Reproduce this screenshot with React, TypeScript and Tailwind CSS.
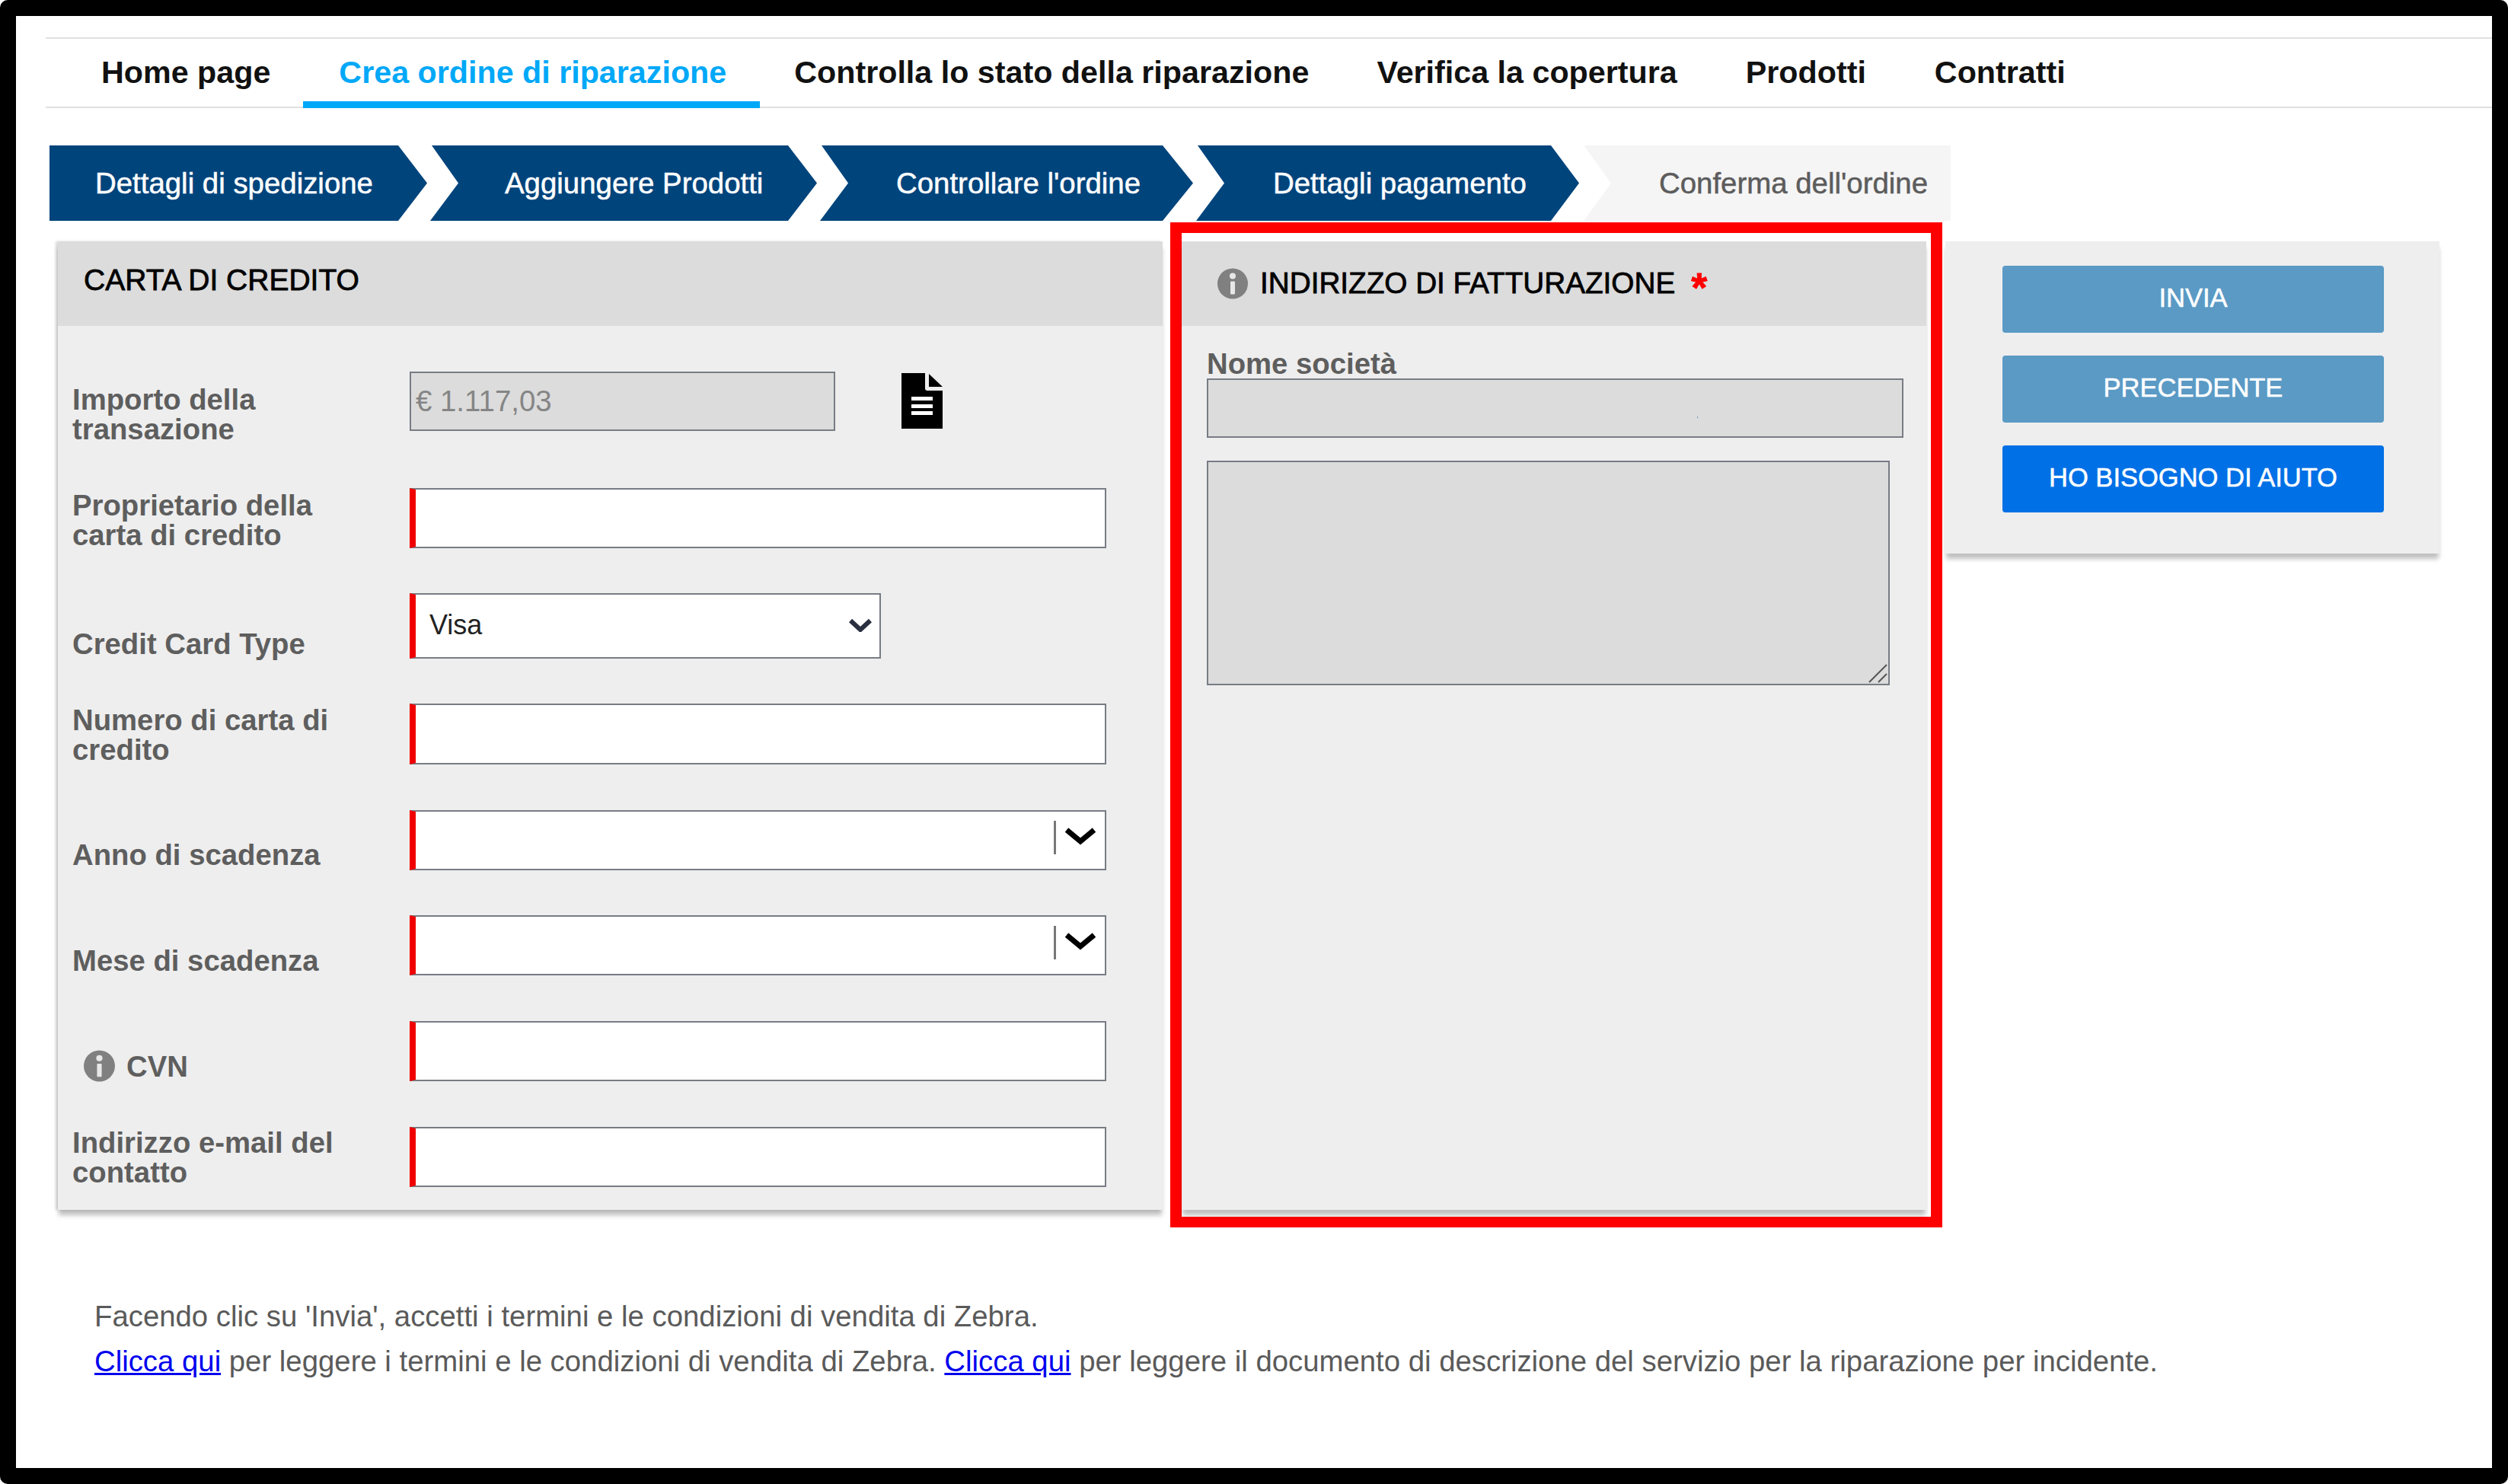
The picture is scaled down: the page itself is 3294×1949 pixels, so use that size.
const font = "font-['Liberation_Sans',Arial,sans-serif]";

function InfoIcon({ className }: { className: string }) {
  return (
    <svg className={className} viewBox="0 0 40 40">
      <circle cx="20" cy="20" r="20" fill="#808080" />
      <circle cx="20" cy="10" r="4" fill="#e8e8e8" />
      <rect x="17" y="17" width="6" height="17" rx="1" fill="#e8e8e8" />
    </svg>
  );
}

function Chevron() {
  return (
    <svg className="w-[42px] h-[24px]" viewBox="0 0 42 24" fill="none" stroke="#000" strokeWidth="7">
      <path d="M3 3l18 15L39 3" />
    </svg>
  );
}

const tabs = [
  { label: "Home page", cls: "pl-[73px] pr-[43px]" },
  { label: "Crea ordine di riparazione", cls: "pl-[47px] pr-[44px]", active: true },
  { label: "Controlla lo stato della riparazione", cls: "pl-[45px] pr-[44px]" },
  { label: "Verifica la copertura", cls: "px-[45px]" },
  { label: "Prodotti", cls: "px-[45px]" },
  { label: "Contratti", cls: "px-[45px]" },
];

const steps = [
  { label: "Dettagli di spedizione", cls: "w-[496px] pl-[60px] bg-[#00447c] text-white [clip-path:polygon(0_0,458px_0,100%_50%,458px_100%,0_100%)]" },
  { label: "Aggiungere Prodotti", cls: "w-[508px] pl-[98px] bg-[#00447c] text-white [clip-path:polygon(2px_0,470px_0,100%_50%,470px_100%,0_100%,37px_50%)]" },
  { label: "Controllare l'ordine", cls: "w-[490px] pl-[100px] bg-[#00447c] text-white [clip-path:polygon(2px_0,450px_0,100%_50%,450px_100%,0_100%,37px_50%)]" },
  { label: "Dettagli pagamento", cls: "w-[503px] pl-[101px] bg-[#00447c] text-white [clip-path:polygon(2px_0,466px_0,100%_50%,466px_100%,0_100%,37px_50%)]" },
  { label: "Conferma dell'ordine", cls: "w-[482px] ml-[2px] pl-[99px] bg-[#f5f5f5] text-[#5c5c5c] [clip-path:polygon(0_0,100%_0,100%_100%,0_100%,36px_50%)]" },
];

const rows = [
  { h: "h-[153px]", pt: "pt-[17px]", label: "Importo della transazione", kind: "amount", box: "" },
  { h: "h-[138px]", pt: "pt-[3px]", label: "Proprietario della carta di credito", kind: "text", box: "h-[79px]" },
  { h: "h-[145px]", pt: "pt-[47px]", label: "Credit Card Type", kind: "select", box: "" },
  { h: "h-[140px]", pt: "pt-[2px]", label: "Numero di carta di credito", kind: "text", box: "h-[80px]" },
  { h: "h-[138px]", pt: "pt-[39px]", label: "Anno di scadenza", kind: "combo", box: "" },
  { h: "h-[139px]", pt: "pt-[40px]", label: "Mese di scadenza", kind: "combo", box: "" },
  { h: "h-[139px]", pt: "pt-[38px]", label: "CVN", kind: "text", info: true, box: "h-[79px]" },
  { h: "h-[109px]", pt: "pt-[1px]", label: "Indirizzo e-mail del contatto", kind: "text", box: "h-[79px]" },
];

const inputBase = "border-2 border-[#787c84] border-l-[8px] border-l-[#f00000] bg-white";
const softBold = "[-webkit-text-stroke:0.5px]";
const headBold = "[-webkit-text-stroke:0.8px]";

function Field({ kind, box }: { kind: string; box: string }) {
  if (kind === "amount") {
    return (
      <div className="flex items-start gap-[87px]">
        <div className="w-[559px] h-[78px] border-2 border-[#787c84] bg-[#dcdcdc] pl-[6px] flex items-center text-[38.4px] text-[#858585]">
          € 1.117,03
        </div>
        <svg className="w-[54px] h-[73px] mt-[2px]" viewBox="0 0 54 73">
          <path d="M0 0h31v20q0 3 3 3h20v50H0z" fill="#000" />
          <path d="M36 1l18 17H36z" fill="#000" />
          <path d="M13 31h28v5H13zM13 41h28v5H13zM13 50h28v5H13z" fill="#fff" />
        </svg>
      </div>
    );
  }
  if (kind === "select") {
    return (
      <div className={`${inputBase} w-[619px] h-[86px] pl-[18px] pb-[2px] flex items-center justify-between pr-[10px] text-[36px] text-[#222]`}>
        Visa
        <svg className="w-[30px] h-[18px]" viewBox="0 0 30 18" fill="none" stroke="#2b3040" strokeWidth="6">
          <path d="M2 3l13 12L28 3" />
        </svg>
      </div>
    );
  }
  if (kind === "combo") {
    return (
      <div className={`${inputBase} w-[915px] h-[79px] flex items-start justify-end pr-[11px] pt-[12px]`}>
        <div className="w-[3px] h-[44px] bg-[#777] mr-[11px]" />
        <div className="mt-[9px]">
          <Chevron />
        </div>
      </div>
    );
  }
  return <div className={`${inputBase} w-[915px] ${box}`} />;
}

export default function App() {
  return (
    <div className={`${font} w-[3294px] h-[1949px] bg-black rounded-[10px] p-[21px]`}>
      <div className="w-full h-full bg-white flex flex-col">
        <nav className="mt-[28px] ml-[39px] h-[93px] border-y-2 border-[#e0e0e0] flex text-[41.25px] font-bold text-[#111]">
          {tabs.map((t) => (
            <div
              key={t.label}
              className={`${t.cls} pt-[14px] whitespace-nowrap ${t.active ? "text-[#00a8f8] border-b-[9px] border-[#00a8f8] h-[91px]" : ""}`}
            >
              {t.label}
            </div>
          ))}
        </nav>

        <div className={`ml-[44px] mt-[49px] flex gap-[4px] h-[99px] text-[38.4px] ${softBold}`}>
          {steps.map((s) => (
            <div key={s.label} className={`${s.cls} flex items-center whitespace-nowrap`}>
              {s.label}
            </div>
          ))}
        </div>

        <div className="ml-[55px] mt-[2px] flex items-start">
          <section className="w-[1451px] mt-[25px] bg-[#eeeeee] shadow-[0_8px_6px_-1px_rgba(0,0,0,0.25),-3px_0_3px_rgba(0,0,0,0.15)]">
            <h2 className={`h-[111px] bg-[#dcdcdc] pl-[34px] pt-[22px] text-[39px] font-normal text-black ${headBold}`}>CARTA DI CREDITO</h2>
            <div className="pt-[60px] pl-[19px]">
              {rows.map((r) => (
                <div key={r.label} className={`${r.h} flex`}>
                  <div className={`${r.pt} w-[443px] pr-[70px] text-[38.3px] leading-[39px] font-bold text-[#5e5e5e] ${r.info ? "flex items-center gap-[15px] pl-[15px] h-fit" : ""}`}>
                    {r.info && <InfoIcon className="w-[41px] h-[42px] shrink-0" />}
                    {r.label}
                  </div>
                  <Field kind={r.kind} box={r.box} />
                </div>
              ))}
            </div>
          </section>

          <div className="w-[1014px] ml-[10px] h-[1320px] border-x-[15px] border-y-[14px] border-[#ff0000] pt-[11px]">
            <section className="w-[978px] h-[1272px] bg-[#eeeeee] shadow-[0_8px_6px_-1px_rgba(0,0,0,0.25)] relative">
              <h2 className={`h-[111px] bg-[#dcdcdc] pl-[47px] pt-[35px] flex items-start text-[38.7px] font-normal text-black ${headBold}`}>
                <InfoIcon className="w-[40px] h-[41px] mr-[16px]" />
                <span className="leading-[40px]">INDIRIZZO DI FATTURAZIONE</span>
                <span className="ml-[21px] text-[#ff0000] font-bold text-[54px] leading-[50px]">*</span>
              </h2>
              <div className="pl-[33px] pt-[27px]">
                <label className="block h-[42px] text-[38.3px] leading-[45px] font-bold text-[#5e5e5e]">Nome società</label>
                <div className="w-[915px] h-[78px] border-2 border-[#787c84] bg-[#dcdcdc] relative">
                  <span className="absolute left-[642px] top-[48px] w-[1px] h-[2px] bg-[#6b93b8]" />
                </div>
                <div className="relative w-[897px] h-[295px] mt-[30px]">
                  <textarea readOnly className="block w-full h-full resize-none border-2 border-[#787c84] bg-[#dcdcdc] outline-none" />
                  <svg className="absolute right-[3px] bottom-[3px] w-[26px] h-[26px]" viewBox="0 0 26 26" stroke="#555" strokeWidth="2">
                    <path d="M2 25L25 2M14 25L25 14" />
                  </svg>
                </div>
              </div>
            </section>
          </div>

          <aside className={`w-[649px] h-[410px] ml-[4px] mt-[25px] bg-[#eeeeee] shadow-[0_8px_6px_-1px_rgba(0,0,0,0.25)] pt-[32px] pl-[75px] flex flex-col gap-[30px] text-[34.5px] text-white ${softBold}`}>
            <button className="w-[501px] h-[88px] pb-[2px] rounded-[4px] bg-[#5a9ac5]">INVIA</button>
            <button className="w-[501px] h-[88px] pb-[2px] rounded-[4px] bg-[#5a9ac5]">PRECEDENTE</button>
            <button className="w-[501px] h-[88px] pb-[2px] rounded-[4px] bg-[#0070e6]">HO BISOGNO DI AIUTO</button>
          </aside>
        </div>

        <div className="ml-[103px] mt-[87px] text-[38.35px] leading-[59px] text-[#5a5a5a] whitespace-nowrap">
          <p>Facendo clic su 'Invia', accetti i termini e le condizioni di vendita di Zebra.</p>
          <p>
            <a className="text-[#0000ee] underline">Clicca qui</a> per leggere i termini e le condizioni di vendita di Zebra.{" "}
            <a className="text-[#0000ee] underline">Clicca qui</a> per leggere il documento di descrizione del servizio per la riparazione per incidente.
          </p>
        </div>
      </div>
    </div>
  );
}
